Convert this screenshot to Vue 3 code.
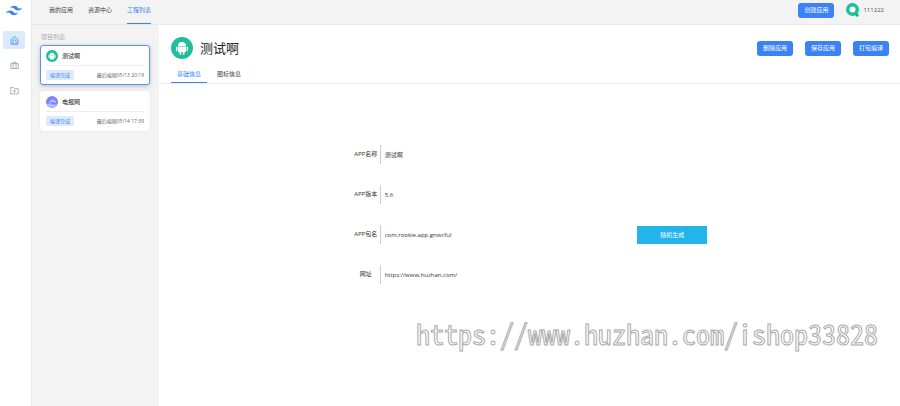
<script setup>
    import { ref } from 'vue';

    const menus = ['我的应用', '资源中心', '工程列表'];
    const activeMenu = ref(2);

    const actions = ['删除应用', '保存应用', '打包编译'];

    const tabs = ['基础信息', '图标信息'];
    const activeTab = ref(0);

    const projects = ref([
        { name: '测试啊', icon: 'android', status: '编译完成', time: '最后编辑05/13 20:19' },
        { name: '电报网', icon: 'planet', status: '编译完成', time: '最后编辑05/14 17:39' },
    ]);
    const activeProject = ref(0);

    const fields = ref([
        { key: 'name', label: 'APP名称', value: '测试啊' },
        { key: 'version', label: 'APP版本', value: '5.6' },
        { key: 'package', label: 'APP包名', value: 'com.rookie.app.gnwcful', random: true },
        { key: 'url', label: '网址', value: 'https://www.huzhan.com/' },
    ]);
</script>

<template>
    <div class="layout">
        <aside class="sidebar">
            <svg class="logo" viewBox="0 4 24 16">
                <path fill="#3b82f6" d="M12 4.800c-3.200 0-5.200 1.600-6 4.800 1.200-1.600 2.600-2.200 4.200-1.800.913.228 1.565.89 2.288 1.624C13.666 10.618 15.027 12 18 12c3.200 0 5.200-1.600 6-4.800-1.200 1.600-2.600 2.200-4.200 1.800-.913-.228-1.565-.89-2.288-1.624C16.337 6.182 14.976 4.800 12 4.800zM6 12c-3.200 0-5.200 1.600-6 4.800 1.200-1.600 2.600-2.200 4.200-1.800.913.228 1.565.89 2.288 1.624C7.666 17.818 9.027 19.200 12 19.200c3.200 0 5.200-1.600 6-4.800-1.200 1.600-2.600 2.200-4.200 1.800-.913-.228-1.565-.89-2.288-1.624C10.337 13.382 8.976 12 6 12z" />
            </svg>
            <button class="side-item side-active" aria-label="首页">
                <svg viewBox="0 0 24 24">
                    <path d="M3 9.500 12 2l9 7.500V22H3zM8 22v-8a4 4 0 0 1 8 0v8" />
                </svg>
            </button>
            <button class="side-item" aria-label="工作">
                <svg viewBox="0 0 24 24">
                    <path d="M2 7h20v13H2zM8 7V3h8v4M8 7v13M16 7v13" />
                </svg>
            </button>
            <button class="side-item" aria-label="新建文件夹">
                <svg viewBox="0 0 24 24">
                    <path d="M2 4h7l3 3h10v14H2zM12 10v7M8.500 13.500h7" />
                </svg>
            </button>
        </aside>

        <div class="page">
            <header class="topbar">
                <nav class="menu">
                    <a v-for="(item, index) in menus" :key="item" href="#" :class="{ 'menu-active': index == activeMenu }" @click.prevent="activeMenu = index">{{ item }}</a>
                </nav>
                <button class="btn">创建应用</button>
                <div class="user">
                    <svg class="avatar" viewBox="0 0 26 28">
                        <circle cx="13" cy="13" r="9.500" fill="#fff" stroke="#1fbf9c" stroke-width="7" />
                        <circle cx="22" cy="24" r="3.500" fill="#10b981" />
                    </svg>
                    <span>111222</span>
                </div>
            </header>

            <div class="body">
                <section class="projects">
                    <h2>项目列表</h2>
                    <button v-for="(item, index) in projects" :key="item.name" class="card" :class="{ 'card-active': index == activeProject }" @click="activeProject = index">
                        <span class="card-head">
                            <svg v-if="item.icon == 'android'" class="card-icon" viewBox="0 0 44 44">
                                <circle cx="22" cy="22" r="22" fill="#1fbf9c" />
                                <path fill="#fff" d="M13 18a9 8 0 0 1 18 0zM13 19.500h18V31H13zM9 18h3v10H9zM32 18h3v10h-3zM16 31h5v5h-5zM23 31h5v5h-5z" />
                            </svg>
                            <svg v-else class="card-icon" viewBox="0 0 44 44">
                                <circle cx="22" cy="22" r="22" fill="#7c86f8" />
                                <path fill="#b4bcfc" d="M2 30c8-4 14-2 20 0s14 2 21-2a22 22 0 0 1-41 2z" />
                                <path fill="#e0e4ff" d="M20 14h7v7h-7zM30 17h5v7h-5zM13 20h5v5h-5z" />
                            </svg>
                            <b>{{ item.name }}</b>
                        </span>
                        <span class="card-foot">
                            <i class="tag">{{ item.status }}</i>
                            <span>{{ item.time }}</span>
                        </span>
                    </button>
                </section>

                <main class="detail">
                    <div class="detail-head">
                        <svg class="app-icon" viewBox="0 0 44 44">
                            <circle cx="22" cy="22" r="22" fill="#1fbf9c" />
                            <path fill="#fff" d="M14 18a8 8 0 0 1 16 0zM14 19h16v10q0 1-1 1H15q-1 0-1-1zM10 20q0-1 1.500-1t1.500 1v7q0 1-1.500 1T10 27zM31 20q0-1 1.500-1t1.500 1v7q0 1-1.500 1T31 27zM17 29h3.500v6H17zM23.500 29H27v6h-3.500z" />
                        </svg>
                        <h1>测试啊</h1>
                        <div class="actions">
                            <button v-for="item in actions" :key="item" class="btn">{{ item }}</button>
                        </div>
                    </div>

                    <div class="tabs">
                        <button v-for="(item, index) in tabs" :key="item" :class="{ 'tab-active': index == activeTab }" @click="activeTab = index">{{ item }}</button>
                    </div>

                    <form class="form" @submit.prevent>
                        <div v-for="item in fields" :key="item.key" class="field">
                            <label :for="item.key">{{ item.label }}</label>
                            <input :id="item.key" v-model="item.value" type="text">
                            <button v-if="item.random" type="button" class="random">随机生成</button>
                        </div>
                    </form>
                </main>
            </div>
        </div>

        <div class="watermark">https://www.huzhan.com/ishop33828</div>
    </div>
</template>

<style>
    body {
        margin: 0;
    }
</style>

<style scoped>
    .layout {
        display: flex;
        min-height: 100vh;
        position: relative;
        background: #f3f3f3;
        color: #333;
        font-family: "Open Sans", "Noto Sans CJK SC", sans-serif;
        font-size: 6px;
        line-height: 10px;
    }

    button {
        margin: 0;
        padding: 0;
        border: 0;
        background: none;
        color: inherit;
        font: inherit;
        cursor: pointer;
    }

    .sidebar {
        width: 31px;
        flex-shrink: 0;
        display: flex;
        flex-direction: column;
        align-items: center;
        gap: 7px;
        padding-right: 3px;
        box-sizing: border-box;
        background: #fff;
        box-shadow: 1px 0 0 #e8e8e8;
    }

    .logo {
        width: 16px;
        height: 11px;
        margin: 5px 0 8px;
    }

    .side-item {
        width: 22px;
        height: 18px;
        display: flex;
        align-items: center;
        justify-content: center;
        border-radius: 2px;
        color: #999;
    }

    .side-item svg {
        width: 9px;
        height: 9px;
        fill: none;
        stroke: currentColor;
        stroke-width: 2;
    }

    .side-active {
        background: #dbeafe;
        color: #3b82f6;
    }

    .page {
        flex: 1;
        display: flex;
        flex-direction: column;
        padding-left: 1px;
    }

    .topbar {
        height: 25px;
        display: flex;
        align-items: center;
        padding: 0 16px 4px 17px;
        box-sizing: border-box;
        border-bottom: 1px solid #e8e8e8;
    }

    .menu {
        flex: 1;
        display: flex;
        gap: 15px;
    }

    .menu a {
        margin-bottom: -4px;
        padding: 5px 0 8px;
        border-bottom: 1px solid transparent;
        color: #444;
        text-decoration: none;
    }

    .menu .menu-active {
        border-color: #3b82f6;
        color: #3b82f6;
    }

    .btn {
        width: 36px;
        height: 15px;
        border-radius: 3px;
        background: #3b82f6;
        color: #fff;
    }

    .user {
        display: flex;
        align-items: center;
        gap: 4px;
        margin-left: 12px;
        color: #555;
    }

    .avatar {
        width: 13px;
        height: 14px;
    }

    .body {
        flex: 1;
        display: flex;
    }

    .projects {
        width: 127px;
        flex-shrink: 0;
        display: flex;
        flex-direction: column;
        gap: 6px;
        padding: 7px 9px 0 8px;
        box-sizing: border-box;
    }

    .projects h2 {
        margin: 0 0 -3px 1px;
        color: #aaa;
        font-size: 6px;
        font-weight: 400;
    }

    .card {
        display: block;
        padding: 4px 5px;
        border: 1px solid #fff;
        border-radius: 3px;
        background: #fff;
        box-shadow: 0 0 2px #ddd;
        text-align: left;
    }

    .card-active {
        border-color: #5b93f0;
        box-shadow: 0 1px 4px #bbb;
    }

    .card-head {
        display: flex;
        align-items: center;
        gap: 4px;
        padding-bottom: 3px;
        border-bottom: 1px solid #eee;
    }

    .card-head b {
        font-weight: 400;
        color: #111;
    }

    .card-icon {
        width: 12px;
        height: 12px;
    }

    .card-foot {
        display: flex;
        align-items: center;
        justify-content: space-between;
        padding-top: 4px;
        color: #666;
        font-size: 5px;
    }

    .tag {
        width: 28px;
        border-radius: 2px;
        background: #dbeafe;
        color: #3b82f6;
        font-style: normal;
        text-align: center;
    }

    .detail {
        flex: 1;
        background: #fff;
    }

    .detail-head {
        display: flex;
        align-items: center;
        gap: 7px;
        padding: 12px 11px 7px 12px;
    }

    .app-icon {
        width: 22px;
        height: 22px;
    }

    .detail-head h1 {
        flex: 1;
        margin: 0;
        color: #222;
        font-size: 13px;
        font-weight: 400;
        line-height: 20px;
    }

    .actions {
        display: flex;
        gap: 12px;
    }

    .tabs {
        display: flex;
        gap: 4px;
        padding-left: 12px;
        border-bottom: 1px solid #eee;
    }

    .tabs button {
        width: 36px;
        padding: 3px 0;
        border-bottom: 1px solid transparent;
        color: #444;
    }

    .tabs .tab-active {
        border-color: #3b82f6;
        color: #3b82f6;
    }

    .form {
        width: 48%;
        display: flex;
        flex-direction: column;
        gap: 21px;
        margin: 61px auto 0;
    }

    .field {
        display: flex;
        align-items: center;
        height: 19px;
    }

    .field label {
        width: 28px;
        line-height: 19px;
        border-right: 1px solid #ccc;
        text-align: center;
    }

    .field input {
        flex: 1;
        padding: 0 4px;
        border: 0;
        outline: 0;
        background: none;
        color: #333;
        font: inherit;
    }

    .random {
        width: 70px;
        height: 18px;
        background: #22b5e9;
        color: #fff;
    }

    .watermark {
        position: absolute;
        right: 22px;
        bottom: 53px;
        color: transparent;
        font-family: "Noto Sans CJK SC", monospace;
        font-size: 28px;
        font-feature-settings: "hwid";
        line-height: 40px;
        -webkit-text-stroke: 1px #aaa;
        pointer-events: none;
    }
</style>
